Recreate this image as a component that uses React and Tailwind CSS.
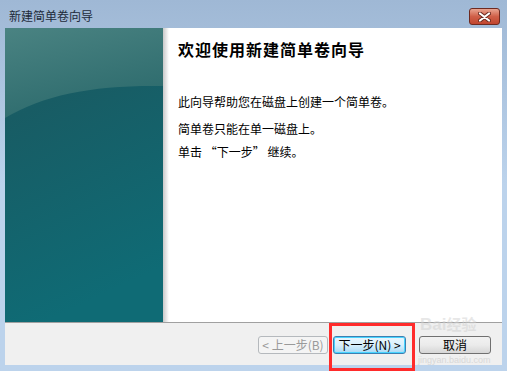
import React from "react";

const cjk = {
  fontFamily: '"Noto Sans CJK SC", "Noto Sans", sans-serif',
};

function PanelArt() {
  // teal wizard art on the left side
  return (
    <svg width="158" height="294" viewBox="0 0 158 294" className="block">
      <defs>
        <linearGradient id="base" x1="0" y1="0" x2="0.25" y2="1">
          <stop offset="0%" stopColor="#23656b" />
          <stop offset="30%" stopColor="#185c64" />
          <stop offset="100%" stopColor="#0f6b75" />
        </linearGradient>
        <linearGradient id="hi" x1="0" y1="0" x2="0.4" y2="1">
          <stop offset="0%" stopColor="#4a8382" />
          <stop offset="100%" stopColor="#2d6b6d" />
        </linearGradient>
      </defs>
      <rect width="158" height="294" fill="url(#base)" />
      <path d="M0 0 H158 V58 C90 57 40 66 0 90 Z" fill="url(#hi)" />
    </svg>
  );
}

function CloseX() {
  return (
    <svg width="13" height="10" viewBox="0 0 13 10">
      <path d="M2 1.5 L11 8.5 M11 1.5 L2 8.5" stroke="#6b2a20" strokeWidth="4" strokeLinecap="round" />
      <path d="M2 1.5 L11 8.5 M11 1.5 L2 8.5" stroke="#ffffff" strokeWidth="2.2" strokeLinecap="round" />
    </svg>
  );
}

export default function App() {
  return (
    <div
      className="relative w-[507px] h-[371px] overflow-hidden bg-gradient-to-b from-[#9fb8d5] via-[#bcd3ec] to-[#bcd3ec] text-black"
      style={cjk}
    >
      {/* title bar */}
      <div className="h-[28px] flex items-start justify-between pl-[9px] pr-[7px]">
        <span className="mt-[8px] text-[12px] leading-[16px] text-[#1e2a3a]">新建简单卷向导</span>
        <div className="mt-[8px] w-[31px] h-[17px] rounded-[3px] border border-[#6e2a20] bg-gradient-to-b from-[#e8a491] via-[#cf5f48] to-[#c0452f] flex items-center justify-center">
          <CloseX />
        </div>
      </div>

      {/* body */}
      <div className="mx-[5px] flex h-[294px]">
        <PanelArt />
        <div className="w-[6px] bg-gradient-to-r from-[#c9c9c9] to-[#ffffff]" />
        <div className="flex-1 bg-white pl-[9px] pt-[12px]">
          <h1 className="text-[16px] leading-[18px] font-bold tracking-[1px]">欢迎使用新建简单卷向导</h1>
          <p className="mt-[36px] text-[12px] leading-[16px]">此向导帮助您在磁盘上创建一个简单卷。</p>
          <p className="mt-[11px] text-[12px] leading-[16px]">简单卷只能在单一磁盘上。</p>
          <p className="mt-[7px] text-[12px] leading-[16px]">单击 “下一步” 继续。</p>
        </div>
      </div>

      {/* button bar */}
      <div className="mx-[5px] h-[43px] border-t border-[#a0a0a0] bg-[#f0f0f0] flex items-start justify-end pr-[11px] pt-[13px]">
        <div className="w-[70px] h-[18px] rounded-[3px] border border-[#b5b9bd] bg-[#f4f4f4] text-[#9a9a9a] text-[12px] leading-[16px] flex items-center justify-center">
          &lt; 上一步(B)
        </div>
        <div className="ml-[5px] w-[73px] h-[18px] rounded-[3px] border border-[#3c7fb1] bg-gradient-to-b from-[#eaf6fd] via-[#d9f0fc] to-[#a7d9f5] text-[12px] leading-[16px] flex items-center justify-center shadow-[inset_0_0_0_1px_#48d4ff]">
          下一步(N) &gt;
        </div>
        <div className="ml-[13px] w-[72px] h-[18px] rounded-[3px] border border-[#707070] bg-gradient-to-b from-[#f2f2f2] via-[#ebebeb] to-[#d6d6d6] text-[12px] leading-[16px] flex items-center justify-center">
          取消
        </div>
      </div>

      {/* annotation box */}
      <div className="absolute left-[329px] top-[323px] w-[86px] h-[48px] border-[3px] border-[#ff2b2b]" />

      {/* watermark */}
      <div className="absolute left-[420px] top-[315px] text-[17px] leading-[20px] font-bold text-[#d0d0d0] opacity-50" style={{ fontFamily: '"Liberation Sans", "Noto Sans CJK SC", sans-serif' }}>
        Bai<span className="text-[15px]">经验</span>
      </div>
      <div className="absolute left-[418px] top-[355px] text-[9px] leading-[10px] text-[#c8c8c8] opacity-60" style={{ fontFamily: '"Liberation Sans", sans-serif' }}>
        jingyan.baidu.com
      </div>
    </div>
  );
}
